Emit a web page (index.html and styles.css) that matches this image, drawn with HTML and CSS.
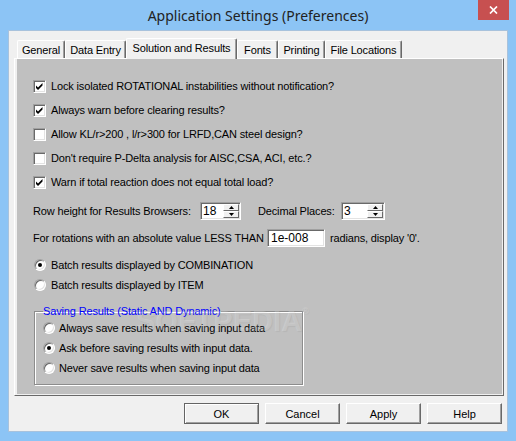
FILE: index.html
```html
<!DOCTYPE html>
<html>
<head>
<meta charset="utf-8">
<link rel="stylesheet" href="styles.css">
</head>
<body>
<div class="titlebar">
  <div></div>
  <div class="title">Application Settings (Preferences)</div>
  <div class="close-wrap">
    <div class="close"><svg width="9" height="8" viewBox="0 0 9 8"><path d="M1 0.5 L8 7.5 M8 0.5 L1 7.5" stroke="#fff" stroke-width="1.7" fill="none"/></svg></div>
  </div>
</div>
<div class="client">
  <div class="tabctl">
    <div class="tabs">
      <div class="tab t1">General</div>
      <div class="tab t2">Data Entry</div>
      <div class="tab t3 active">Solution and Results</div>
      <div class="tab t4">Fonts</div>
      <div class="tab t5">Printing</div>
      <div class="tab t6">File Locations</div>
    </div>
    <div class="page">
      <div class="pane">
        <div class="row"><span class="cb"><svg width="9" height="9" viewBox="0 0 9 9"><polygon points="1,3.5 3,5.5 7.5,1 7.5,3.5 3,8 1,6" fill="#000"/></svg></span><span>Lock isolated ROTATIONAL instabilities without notification?</span></div>
        <div class="row"><span class="cb"><svg width="9" height="9" viewBox="0 0 9 9"><polygon points="1,3.5 3,5.5 7.5,1 7.5,3.5 3,8 1,6" fill="#000"/></svg></span><span>Always warn before clearing results?</span></div>
        <div class="row"><span class="cb"></span><span>Allow KL/r&gt;200 , l/r&gt;300 for LRFD,CAN steel design?</span></div>
        <div class="row"><span class="cb"></span><span>Don't require P-Delta analysis for AISC,CSA, ACI, etc.?</span></div>
        <div class="row"><span class="cb"><svg width="9" height="9" viewBox="0 0 9 9"><polygon points="1,3.5 3,5.5 7.5,1 7.5,3.5 3,8 1,6" fill="#000"/></svg></span><span>Warn if total reaction does not equal total load?</span></div>

        <div class="row spinrow">
          <span class="lbl-row">Row height for Results Browsers:</span>
          <span class="field spin s1"><span class="val">18</span><span class="spinbtns"><span class="sbtn"><svg width="5" height="3" viewBox="0 0 5 3"><polygon points="0,3 2.5,0 5,3" fill="#000"/></svg></span><span class="sbtn"><svg width="5" height="3" viewBox="0 0 5 3"><polygon points="0,0 5,0 2.5,3" fill="#000"/></svg></span></span></span>
          <span class="lbl-dec">Decimal Places:</span>
          <span class="field spin s2"><span class="val">3</span><span class="spinbtns"><span class="sbtn"><svg width="5" height="3" viewBox="0 0 5 3"><polygon points="0,3 2.5,0 5,3" fill="#000"/></svg></span><span class="sbtn"><svg width="5" height="3" viewBox="0 0 5 3"><polygon points="0,0 5,0 2.5,3" fill="#000"/></svg></span></span></span>
        </div>

        <div class="row rotrow">
          <span class="lbl-rot">For rotations with an absolute value LESS THAN</span>
          <span class="field rot"><span class="val">1e-008</span></span>
          <span class="after-rot">radians, display '0'.</span>
        </div>

        <div class="rrow first"><span class="radio on"></span><span>Batch results displayed by COMBINATION</span></div>
        <div class="rrow"><span class="radio"></span><span>Batch results displayed by ITEM</span></div>

        <fieldset class="group">
          <legend>Saving Results (Static AND Dynamic)</legend>
          <div class="grow"><span class="radio"></span><span>Always save results when saving input data</span></div>
          <div class="grow"><span class="radio on"></span><span>Ask before saving results with input data.</span></div>
          <div class="grow"><span class="radio"></span><span>Never save results when saving input data</span></div>
        </fieldset>
      </div>
      <div class="watermark">SOFTPEDIA<span class="reg">®</span></div>
    </div>
  </div>
  <div class="buttons">
    <div class="btn default">OK</div>
    <div class="btn">Cancel</div>
    <div class="btn">Apply</div>
    <div class="btn">Help</div>
  </div>
</div>
</body>
</html>
```
FILE: styles.css
```css
html, body {
  margin: 0;
  padding: 0;
}
body {
  width: 516px;
  height: 441px;
  overflow: hidden;
  background: #8cc4f5;
  font-family: "Liberation Sans", Arial, sans-serif;
  font-size: 11px;
  color: #000;
}
.titlebar {
  height: 30px;
  display: grid;
  grid-template-columns: 1fr auto 1fr;
}
.title {
  font-family: "Noto Sans", "Liberation Sans", sans-serif;
  font-size: 14px;
  line-height: 32px;
  color: #222;
  white-space: nowrap;
}
.close-wrap {
  justify-self: end;
}
.close {
  width: 31px;
  height: 20px;
  margin-right: 7px;
  background: #c75050;
  display: flex;
  align-items: center;
  justify-content: center;
}
.client {
  margin: 0 8px;
  height: 402px;
  box-sizing: border-box;
  border: 1px solid #a8c2dc;
  background: #f0f0f0;
}
.tabctl {
  margin: 7px 0 0 5px;
  width: 490px;
}
.tabs {
  display: flex;
  align-items: flex-end;
  height: 20px;
  padding-left: 3px;
}
.tab {
  height: 18px;
  box-sizing: border-box;
  border-top: 1px solid #fff;
  border-left: 1px solid #fff;
  border-right: 1px solid #696969;
  box-shadow: inset -1px 0 0 #a0a0a0;
  border-radius: 2px 2px 0 0;
  background: #f0f0f0;
  display: flex;
  align-items: center;
  justify-content: center;
  letter-spacing: -0.15px;
  white-space: nowrap;
}
.t1 { width: 48px; }
.t2 { width: 61px; }
.t3 { width: 111px; }
.t4 { width: 41px; }
.t5 { width: 47px; }
.t6 { width: 77px; }
.tab.active {
  height: 21px;
  margin-bottom: -1px;
  padding-bottom: 2px;
  position: relative;
  z-index: 1;
}
.page {
  position: relative;
  box-sizing: border-box;
  height: 338px;
  border-top: 1px solid #fff;
  border-left: 1px solid #fff;
  border-right: 1px solid #696969;
  border-bottom: 1px solid #696969;
  padding: 0 1px 1px 2px;
  background: #f0f0f0;
}
.pane {
  box-sizing: border-box;
  height: 100%;
  background: #c0c0c0;
  padding: 15px 0 0 16px;
  letter-spacing: -0.15px;
}
.row {
  display: flex;
  align-items: center;
  height: 24px;
  white-space: nowrap;
}
.cb {
  width: 13px;
  height: 13px;
  box-sizing: border-box;
  flex: 0 0 13px;
  margin-right: 5px;
  background: #fff;
  border: 1px solid;
  border-color: #a0a0a0 #fff #fff #a0a0a0;
  box-shadow: inset 1px 1px 0 #696969, inset -1px -1px 0 #e3e3e3;
  display: flex;
  align-items: center;
  justify-content: center;
}
.cb svg {
  display: block;
}
.spinrow {
  margin-top: 5px;
}
.lbl-row {
  flex: 0 0 167px;
}
.lbl-dec {
  flex: 0 0 83px;
  margin-left: 17px;
}
.field {
  box-sizing: border-box;
  height: 18px;
  background: #fff;
  border: 1px solid;
  border-color: #a0a0a0 #fff #fff #a0a0a0;
  box-shadow: inset 1px 1px 0 #696969, inset -1px -1px 0 #e3e3e3;
  display: flex;
  align-items: stretch;
  font-size: 12px;
  letter-spacing: 0;
}
.val {
  flex: 1;
  padding-left: 2px;
  padding-top: 1px;
  line-height: 14px;
}
.s1 { flex: 0 0 41px; }
.s2 { flex: 0 0 44px; }
.spinbtns {
  display: flex;
  flex-direction: column;
  width: 16px;
  padding: 1px 1px 1px 0;
}
.sbtn {
  flex: 1;
  box-sizing: border-box;
  background: #f0f0f0;
  border: 1px solid;
  border-color: #fff #696969 #696969 #fff;
  display: flex;
  align-items: center;
  justify-content: center;
}
.sbtn svg {
  display: block;
}
.rotrow {
  margin-top: 3px;
}
.lbl-rot {
  flex: 0 0 234px;
}
.rot {
  flex: 0 0 58px;
}
.rot .val {
  padding-left: 3px;
}
.after-rot {
  margin-left: 5px;
}
.rrow {
  display: flex;
  align-items: center;
  height: 20px;
  white-space: nowrap;
}
.rrow.first {
  margin-top: 5px;
}
.rrow .radio {
  margin-left: 1px;
}
.radio {
  position: relative;
  width: 12px;
  height: 12px;
  flex: 0 0 12px;
  box-sizing: border-box;
  margin-right: 5px;
  border-radius: 50%;
  background: #fff;
  border: 1px solid;
  border-color: #a0a0a0 #fff #fff #a0a0a0;
  box-shadow: inset 1px 1px 0 #696969, inset -1px -1px 0 #e3e3e3;
}
.radio.on::after {
  content: "";
  position: absolute;
  left: 3px;
  top: 3px;
  width: 4px;
  height: 4px;
  border-radius: 50%;
  background: #000;
}
.group {
  margin: 9px 0 0 1px;
  width: 269px;
  box-sizing: border-box;
  padding: 0 0 6px 8px;
  border: 1px solid #8c8c8c;
  box-shadow: 1px 1px 0 #fff, inset 1px 1px 0 #fff;
}
.group legend {
  padding: 0;
  line-height: 14px;
  color: #0000ff;
}
.grow {
  display: flex;
  align-items: center;
  height: 20px;
  white-space: nowrap;
}
.grow .radio {
  margin-right: 4px;
}
.watermark {
  position: absolute;
  left: 121px;
  top: 248px;
  font-family: "Liberation Sans", Arial, sans-serif;
  font-weight: bold;
  font-size: 29px;
  line-height: 29px;
  color: rgba(255, 255, 255, 0.2);
  text-shadow: 1px 1px 1px rgba(0, 0, 0, 0.05);
  pointer-events: none;
  white-space: nowrap;
}
.reg {
  font-size: 9px;
  vertical-align: top;
  line-height: 9px;
}
.buttons {
  display: flex;
  justify-content: flex-end;
  gap: 6px;
  margin: 7px 5px 0 0;
}
.btn {
  width: 75px;
  height: 21px;
  box-sizing: border-box;
  border: 1px solid;
  border-color: #fff #696969 #696969 #fff;
  box-shadow: inset -1px -1px 0 #a0a0a0;
  background: #f0f0f0;
  display: flex;
  align-items: center;
  justify-content: center;
}
.btn.default {
  border-color: #646464;
  box-shadow: inset 1px 1px 0 #fff, inset -1px -1px 0 #a0a0a0;
}
```
